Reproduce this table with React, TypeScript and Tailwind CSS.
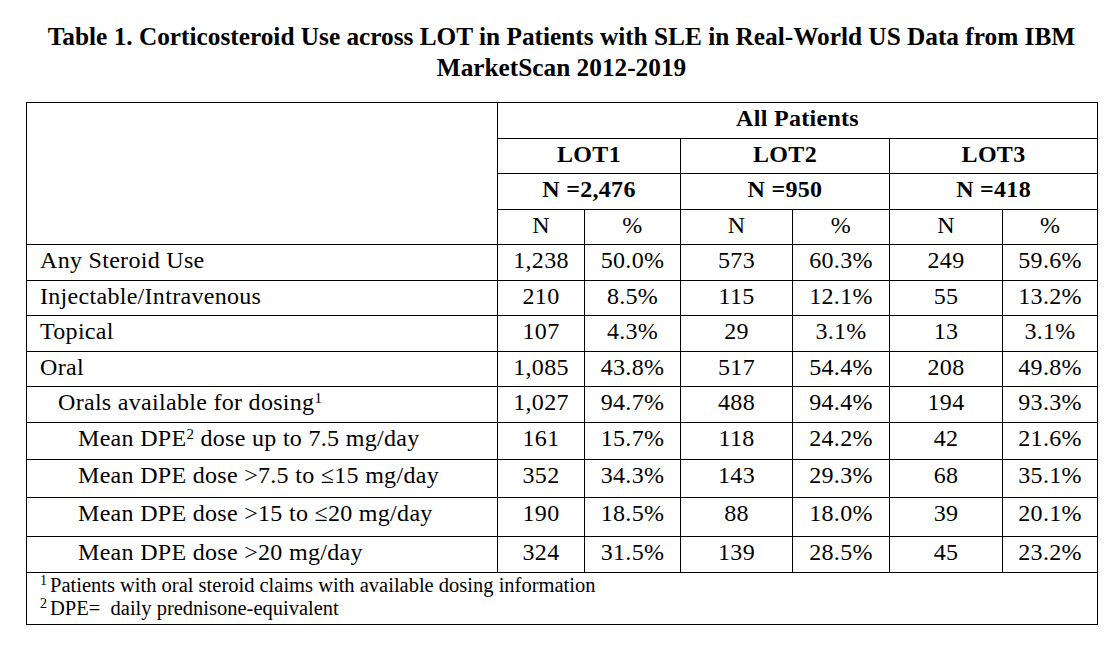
import React from "react";

const serif = { fontFamily: '"Liberation Serif", "Times New Roman", serif' };

type Row = { label: React.ReactNode; indent: string; h: string; vals: string[] };

const rows: Row[] = [
  { label: "Any Steroid Use", indent: "pl-[13px]", h: "h-[36px]", vals: ["1,238", "50.0%", "573", "60.3%", "249", "59.6%"] },
  { label: "Injectable/Intravenous", indent: "pl-[13px]", h: "h-[35px]", vals: ["210", "8.5%", "115", "12.1%", "55", "13.2%"] },
  { label: "Topical", indent: "pl-[13px]", h: "h-[36px]", vals: ["107", "4.3%", "29", "3.1%", "13", "3.1%"] },
  { label: "Oral", indent: "pl-[13px]", h: "h-[35px]", vals: ["1,085", "43.8%", "517", "54.4%", "208", "49.8%"] },
  {
    label: (
      <>
        Orals available for dosing<sup className="text-[15px] top-[-0.45em]">1</sup>
      </>
    ),
    indent: "pl-[31px]",
    h: "h-[36px]",
    vals: ["1,027", "94.7%", "488", "94.4%", "194", "93.3%"],
  },
  {
    label: (
      <>
        Mean DPE<sup className="text-[15px] top-[-0.45em]">2</sup> dose up to 7.5 mg/day
      </>
    ),
    indent: "pl-[51px]",
    h: "h-[37px]",
    vals: ["161", "15.7%", "118", "24.2%", "42", "21.6%"],
  },
  { label: "Mean DPE dose >7.5 to \u226415 mg/day", indent: "pl-[51px]", h: "h-[38px]", vals: ["352", "34.3%", "143", "29.3%", "68", "35.1%"] },
  { label: "Mean DPE dose >15 to \u226420 mg/day", indent: "pl-[51px]", h: "h-[39px]", vals: ["190", "18.5%", "88", "18.0%", "39", "20.1%"] },
  { label: "Mean DPE dose >20 mg/day", indent: "pl-[51px]", h: "h-[36px]", vals: ["324", "31.5%", "139", "28.5%", "45", "23.2%"] },
];

export default function App() {
  const cell = "border border-black p-0 align-top pt-[2px] leading-[27px]";
  return (
    <div className="min-h-[646px] w-[1117px] bg-white text-black" style={serif}>
      <div className="pl-[26px] pt-[21px]">
        <div className="w-[1071px] text-center font-bold text-[25.3px] leading-[31px]">
          Table 1. Corticosteroid Use across LOT in Patients with SLE in Real-World US Data from IBM
          <br />
          MarketScan 2012-2019
        </div>
        <table className="mt-[19px] w-[1071px] table-fixed border-collapse text-[24px] tracking-[0.3px]">
          <colgroup>
            <col className="w-[471px]" />
            <col className="w-[87px]" />
            <col className="w-[96px]" />
            <col className="w-[112px]" />
            <col className="w-[97px]" />
            <col className="w-[113px]" />
            <col className="w-[95px]" />
          </colgroup>
          <tbody>
            <tr className="h-[36px]">
              <td rowSpan={4} className="border border-black p-0" />
              <td colSpan={6} className={`${cell} text-center font-bold`}>
                All Patients
              </td>
            </tr>
            <tr className="h-[35px]">
              <td colSpan={2} className={`${cell} text-center font-bold`}>LOT1</td>
              <td colSpan={2} className={`${cell} text-center font-bold`}>LOT2</td>
              <td colSpan={2} className={`${cell} text-center font-bold`}>LOT3</td>
            </tr>
            <tr className="h-[36px]">
              <td colSpan={2} className={`${cell} text-center font-bold`}>N =2,476</td>
              <td colSpan={2} className={`${cell} text-center font-bold`}>N =950</td>
              <td colSpan={2} className={`${cell} text-center font-bold`}>N =418</td>
            </tr>
            <tr className="h-[35px]">
              {["N", "%", "N", "%", "N", "%"].map((t, i) => (
                <td key={i} className={`${cell} text-center`}>
                  {t}
                </td>
              ))}
            </tr>
            {rows.map((r, i) => (
              <tr key={i} className={r.h}>
                <td className={`${cell} ${r.indent} text-left whitespace-nowrap`}>{r.label}</td>
                {r.vals.map((v, j) => (
                  <td key={j} className={`${cell} text-center`}>
                    {v}
                  </td>
                ))}
              </tr>
            ))}
            <tr className="h-[52px]">
              <td colSpan={7} className="border border-black p-0 pl-[13px] pt-[1px] align-top text-[20.5px] leading-[22.5px] tracking-normal">
                <div>
                  <sup className="text-[14px] top-[-0.5em] mr-[3px]">1</sup>Patients with oral steroid claims with available dosing information
                </div>
                <div>
                  <sup className="text-[14px] top-[-0.5em] mr-[3px]">2</sup>DPE={"\u00a0"} daily prednisone-equivalent
                </div>
              </td>
            </tr>
          </tbody>
        </table>
      </div>
    </div>
  );
}
